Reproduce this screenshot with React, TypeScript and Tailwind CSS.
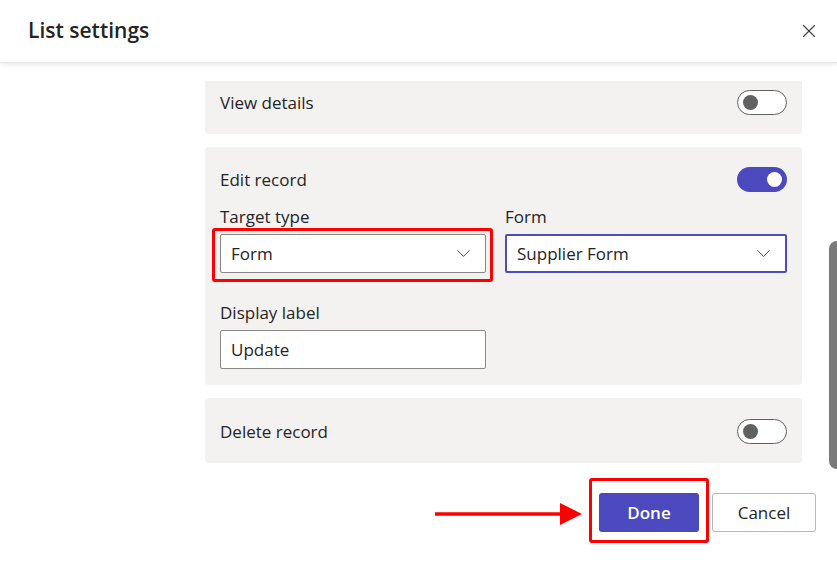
import { X, ChevronDown } from "lucide-react";

const font = { fontFamily: '"Open Sans", "Noto Sans", Arial, sans-serif' };

function Toggle({ on }: { on: boolean }) {
  if (on) {
    return (
      <div className="flex h-[25px] w-[50px] items-center justify-end rounded-full bg-[#4c48bd] pr-[5px]">
        <div className="h-[15px] w-[15px] rounded-full bg-white" />
      </div>
    );
  }
  return (
    <div className="flex h-[25px] w-[50px] items-center rounded-full border border-[#616161] bg-white pl-[5px]">
      <div className="h-[15px] w-[15px] rounded-full bg-[#616161]" />
    </div>
  );
}

function Dropdown({ value, active, width }: { value: string; active?: boolean; width: string }) {
  return (
    <div
      className={`flex h-[39px] items-center justify-between rounded-[2px] bg-white pl-[10px] pr-[10px] ${width} ${
        active ? "border-2 border-[#4c4ec0]" : "border border-[#8a8886]"
      }`}
    >
      <span className="text-[17px] text-[#242424]">{value}</span>
      <ChevronDown className="h-[23px] w-[23px] text-[#424242]" strokeWidth={1} />
    </div>
  );
}

export default function App() {
  return (
    <div className="relative h-[563px] w-[837px] overflow-hidden bg-white" style={font}>
      <div className="flex h-[63px] items-center justify-between border-b border-[#e6e6e6] pl-[28px] pr-[17px] shadow-[0_2px_4px_rgba(0,0,0,0.08)]">
        <h1 className="text-[21px] font-semibold text-[#242424]">List settings</h1>
        <X className="h-[22px] w-[22px] text-[#424242]" strokeWidth={1.2} />
      </div>

      <div className="ml-[205px] mt-[18px] flex w-[597px] flex-col gap-[13px]">
        <div className="h-[53px] rounded-b-[4px] bg-[#f3f2f1] px-[15px] pt-[9px]">
          <div className="flex h-[25px] items-center justify-between">
            <span className="text-[17px] text-[#242424]">View details</span>
            <Toggle on={false} />
          </div>
        </div>

        <div className="rounded-[4px] bg-[#f3f2f1] px-[15px] pb-[16px] pt-[20px]">
          <div className="flex h-[25px] items-center justify-between">
            <span className="text-[17px] text-[#242424]">Edit record</span>
            <Toggle on={true} />
          </div>
          <div className="mt-[14px] flex gap-[19px]">
            <div className="flex flex-col gap-[6px]">
              <span className="text-[17px] leading-[22px] text-[#242424]">Target type</span>
              <Dropdown value="Form" width="w-[266px]" />
            </div>
            <div className="flex flex-col gap-[6px]">
              <span className="text-[17px] leading-[22px] text-[#242424]">Form</span>
              <Dropdown value="Supplier Form" active width="w-[282px]" />
            </div>
          </div>
          <div className="mt-[29px] flex flex-col gap-[6px]">
            <span className="text-[17px] leading-[22px] text-[#242424]">Display label</span>
            <div className="flex h-[39px] w-[266px] items-center rounded-[2px] border border-[#8a8886] bg-white pl-[10px]">
              <span className="text-[17px] text-[#242424]">Update</span>
            </div>
          </div>
        </div>

        <div className="h-[65px] rounded-[4px] bg-[#f3f2f1] px-[15px] pt-[21px]">
          <div className="flex h-[25px] items-center justify-between">
            <span className="text-[17px] text-[#242424]">Delete record</span>
            <Toggle on={false} />
          </div>
        </div>
      </div>

      <div className="mr-[21px] mt-[30px] flex justify-end gap-[13px]">
        <button className="h-[39px] w-[100px] rounded-[3px] bg-[#4c48bd] text-[17px] font-semibold text-white">
          Done
        </button>
        <button className="h-[39px] w-[104px] rounded-[3px] border border-[#b8b8b8] bg-white text-[17px] text-[#242424]">
          Cancel
        </button>
      </div>

      {/* scrollbar */}
      <div className="absolute right-[0px] top-[241px] h-[228px] w-[8px] rounded-l-full bg-[#7a7a7a]" />

      {/* annotations */}
      <div className="absolute left-[212px] top-[228px] h-[54px] w-[281px] rounded-[3px] border-[3px] border-[#ff0000]" />
      <div className="absolute left-[589px] top-[478px] h-[65px] w-[120px] rounded-[3px] border-[3px] border-[#ff0000]" />
      <svg className="absolute left-[434px] top-[502px]" width="150" height="26" viewBox="0 0 150 26">
        <line x1="1" y1="12" x2="128" y2="12" stroke="#ff0000" strokeWidth="3.5" />
        <polygon points="126,1 148,12 126,23" fill="#ff0000" />
      </svg>
    </div>
  );
}
